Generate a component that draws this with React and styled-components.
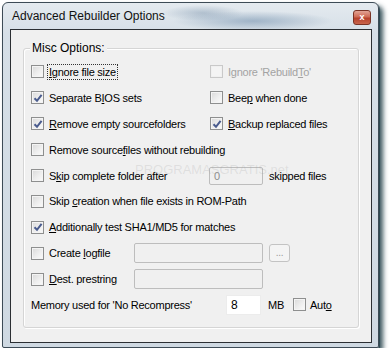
import styled, { createGlobalStyle } from "styled-components";

const GlobalStyles = createGlobalStyle`
  body {
    margin: 0;
    background: #ffffff;
    font-family: "Liberation Sans", Arial, sans-serif;
    font-size: 11px;
    color: #000;
  }
`;

const Window = styled.div`
  margin: 2px 0 0 2px;
  width: 377px;
  height: 346px;
  box-sizing: border-box;
  border: 1px solid #3d4b56;
  border-radius: 6px 6px 2px 2px;
  padding: 0 6px 4px 7px;
  display: flex;
  flex-direction: column;
  background:
    radial-gradient(ellipse 80px 10px at 250px 18px, rgba(110, 140, 170, 0.55), rgba(110, 140, 170, 0) 100%),
    radial-gradient(ellipse 40px 8px at 200px 10px, rgba(90, 120, 150, 0.35), rgba(90, 120, 150, 0) 100%),
    linear-gradient(180deg, #e4eaef 0%, #d6dfe7 30px, #cfd9e2 100%);
  box-shadow: 4px 4px 5px rgba(25, 55, 65, 0.85), 1px 1px 0 rgba(40, 70, 80, 0.6);
`;

const TitleBar = styled.div`
  height: 26px;
  display: flex;
  align-items: center;
  justify-content: space-between;
  padding-left: 2px;
`;

const Title = styled.span`
  font-size: 12px;
  color: #111;
`;

const CloseButton = styled.div`
  width: 16px;
  height: 13px;
  margin-right: 1px;
  margin-top: 2px;
  border: 1px solid #7a3325;
  border-radius: 3px;
  background: linear-gradient(180deg, #e2a394 0%, #cf6b55 45%, #b5412c 55%, #c8654c 100%);
  display: flex;
  align-items: center;
  justify-content: center;
  color: #fff;
  font-size: 9px;
  font-weight: bold;
  line-height: 1;
`;

const Client = styled.div`
  flex: 1;
  border: 1px solid #2b2f33;
  background: #f0f0f0;
  display: flex;
  padding: 18px 12px 14px 12px;
  letter-spacing: -0.25px;
`;

const GroupBox = styled.div`
  position: relative;
  flex: 1;
  border: 1px solid #d5d5d5;
  border-radius: 3px;
  box-shadow: inset 1px 1px 0 #fff, 1px 1px 0 #fff;
  padding: 10px 7px 0 7px;
  display: grid;
  grid-template-columns: 179px 1fr;
  grid-auto-rows: 25.9px;
  align-items: center;
`;

const Caption = styled.span`
  position: absolute;
  top: -8px;
  left: 6px;
  padding: 0 2px;
  background: #f0f0f0;
  font-size: 12px;
  letter-spacing: 0;
`;

const Watermark = styled.span`
  position: absolute;
  left: 111px;
  top: 113px;
  font-size: 13px;
  letter-spacing: 0;
  color: rgba(160, 160, 160, 0.22);
  pointer-events: none;
`;

const Row = styled.div`
  display: flex;
  align-items: center;
  grid-column: ${(p) => (p.$wide ? "1 / span 2" : "auto")};
`;

const CheckWrap = styled.label`
  display: flex;
  align-items: center;
  gap: ${(p) => p.$gap || 4}px;
  width: ${(p) => (p.$width ? `${p.$width}px` : "auto")};
  margin-left: ${(p) => p.$ml || 0}px;
  color: ${(p) => (p.$disabled ? "#a3a3a3" : "#000")};
`;

const Box = styled.span`
  width: 11px;
  height: 11px;
  flex: none;
  border: 1px solid ${(p) => (p.$disabled ? "#c9c9c9" : "#8e8f8f")};
  background: ${(p) =>
    p.$disabled
      ? "#f4f4f4"
      : "linear-gradient(135deg, #d9d9d9 0%, #eeeeee 55%, #fbfbfb 100%)"};
  box-shadow: inset 0 0 0 1px ${(p) => (p.$disabled ? "#f0f0f0" : "#f4f4f4")};
  display: flex;
  align-items: center;
  justify-content: center;
`;

const Text = styled.span`
  white-space: nowrap;
  padding: 1px 1px;
  outline: ${(p) => (p.$focus ? "1px dotted #333" : "none")};
  u {
    text-decoration: underline;
    text-underline-offset: 1px;
  }
`;

const Plain = styled.span`
  white-space: nowrap;
  margin-left: ${(p) => p.$ml || 0}px;
  width: ${(p) => (p.$width ? `${p.$width}px` : "auto")};
`;

const Field = styled.div`
  box-sizing: border-box;
  width: ${(p) => p.$w}px;
  height: ${(p) => p.$h || 20}px;
  margin-left: ${(p) => p.$ml || 0}px;
  border: 1px solid ${(p) => (p.$white ? "#ececec" : "#bdbdbd")};
  border-radius: ${(p) => (p.$white ? 0 : 2)}px;
  background: ${(p) => (p.$white ? "#fff" : "#f0f0f0")};
  color: ${(p) => (p.$white ? "#000" : "#8d8d8d")};
  font-size: ${(p) => (p.$white ? 12 : 11)}px;
  padding-left: 4px;
  display: flex;
  align-items: center;
`;

const DotsButton = styled.div`
  box-sizing: border-box;
  width: 21px;
  height: 18px;
  margin-left: 6px;
  border: 1px solid #c3c3c3;
  border-radius: 3px;
  background: #f4f4f4;
  color: #9a9a9a;
  font-size: 10px;
  display: flex;
  align-items: center;
  justify-content: center;
  padding-bottom: 2px;
`;

const Tick = () => (
  <svg width="10" height="10" viewBox="0 0 10 10">
    <path d="M1.5 5.2 L4 7.8 L8.6 1.8" fill="none" stroke="#4a5c8e" strokeWidth="2" />
  </svg>
);

function Check({ checked, disabled, focus, children, width, gap, ml }) {
  return (
    <CheckWrap $disabled={disabled} $width={width} $gap={gap} $ml={ml}>
      <Box $disabled={disabled}>{checked && <Tick />}</Box>
      <Text $focus={focus}>{children}</Text>
    </CheckWrap>
  );
}

export default function App() {
  return (
    <>
      <GlobalStyles />
      <Window>
        <TitleBar>
          <Title>Advanced Rebuilder Options</Title>
          <CloseButton>x</CloseButton>
        </TitleBar>
        <Client>
          <GroupBox>
            <Caption>Misc Options:</Caption>
            <Watermark>PROGRAMASGRATIS.net</Watermark>

            <Row>
              <Check focus>
                <u>I</u>gnore file size
              </Check>
            </Row>
            <Row>
              <Check disabled>
                Ignore 'Rebuild<u>T</u>o'
              </Check>
            </Row>

            <Row>
              <Check checked>
                Separate B<u>I</u>OS sets
              </Check>
            </Row>
            <Row>
              <Check>
                Bee<u>p</u> when done
              </Check>
            </Row>

            <Row>
              <Check checked>
                <u>R</u>emove empty sourcefolders
              </Check>
            </Row>
            <Row>
              <Check checked>
                <u>B</u>ackup replaced files
              </Check>
            </Row>

            <Row $wide>
              <Check>
                Remove source<u>f</u>iles without rebuilding
              </Check>
            </Row>

            <Row $wide>
              <Check width={178}>
                S<u>k</u>ip complete folder after
              </Check>
              <Field $w={54} $h={18}>0</Field>
              <Plain $ml={6}>skipped files</Plain>
            </Row>

            <Row $wide>
              <Check>
                Skip <u>c</u>reation when file exists in ROM-Path
              </Check>
            </Row>

            <Row $wide>
              <Check checked>
                <u>A</u>dditionally test SHA1/MD5 for matches
              </Check>
            </Row>

            <Row $wide>
              <Check width={103}>
                Create <u>l</u>ogfile
              </Check>
              <Field $w={129} />
              <DotsButton>...</DotsButton>
            </Row>

            <Row $wide>
              <Check width={103}>
                <u>D</u>est. prestring
              </Check>
              <Field $w={129} />
            </Row>

            <Row $wide>
              <Plain $width={195}>Memory used for 'No Recompress'</Plain>
              <Field $w={35} $white>8</Field>
              <Plain $ml={7}>MB</Plain>
              <Check gap={3} ml={9}>
                Aut<u>o</u>
              </Check>
            </Row>
          </GroupBox>
        </Client>
      </Window>
    </>
  );
}
